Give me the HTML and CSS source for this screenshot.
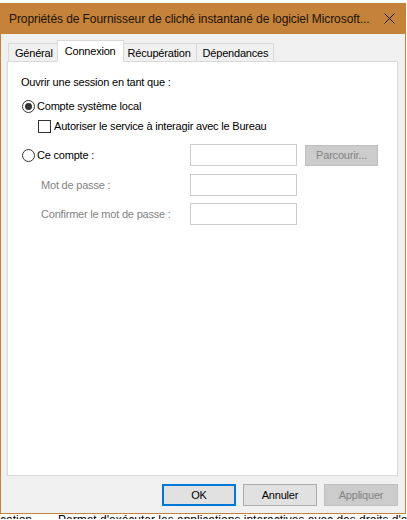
FILE: index.html
```html
<!DOCTYPE html>
<html lang="fr">
<head>
<meta charset="utf-8">
<title>Propriétés</title>
<link rel="stylesheet" href="styles.css">
</head>
<body>
<div class="window">
  <div class="titlebar">
    <span class="title">Propriétés de Fournisseur de cliché instantané de logiciel Microsoft...</span>
    <svg class="close" width="11" height="11" viewBox="0 0 11 11"><path d="M0.5 0.5 L10.5 10.5 M10.5 0.5 L0.5 10.5" stroke="#1a1a1a" stroke-width="1" fill="none"/></svg>
  </div>
  <div class="content">
    <div class="tabs">
      <div class="tab">Général</div>
      <div class="tab active">Connexion</div>
      <div class="tab">Récupération</div>
      <div class="tab">Dépendances</div>
    </div>
    <div class="panel">
      <div class="label">Ouvrir une session en tant que :</div>
      <div class="opt first"><span class="radio checked"></span><span>Compte système local</span></div>
      <div class="opt sub"><span class="check"></span><span>Autoriser le service à interagir avec le Bureau</span></div>
      <div class="acct">
        <div class="opt"><span class="radio"></span><span>Ce compte :</span></div>
        <div class="field"></div>
        <div class="btn disabled small">Parcourir...</div>
        <div class="dim">Mot de passe :</div>
        <div class="field"></div>
        <div></div>
        <div class="dim">Confirmer le mot de passe :</div>
        <div class="field"></div>
        <div></div>
      </div>
    </div>
    <div class="buttons">
      <div class="btn default">OK</div>
      <div class="btn">Annuler</div>
      <div class="btn disabled">Appliquer</div>
    </div>
  </div>
</div>
<div class="behind"><span class="c1">cation</span><span class="c2">Permet d'exécuter les applications interactives avec des droits d'administrateur</span></div>
</body>
</html>
```

FILE: styles.css
```css
html, body {
  margin: 0;
  padding: 0;
  background: #ffffff;
  overflow: hidden;
}
body {
  width: 407px;
  height: 520px;
  font-family: "Liberation Sans", Arial, sans-serif;
  font-size: 11px;
  letter-spacing: -0.2px;
  color: #000;
}
.window {
  margin-top: 3px;
  width: 406px;
  height: 511px;
  box-sizing: border-box;
  border: 1px solid #c4823b;
  border-top: none;
  background: #f0f0f0;
  display: flex;
  flex-direction: column;
}
.titlebar {
  height: 31px;
  background: #c4823b;
  margin: 0 -1px;
  display: flex;
  align-items: center;
  justify-content: space-between;
  padding: 0 11px 0 9px;
  flex: none;
}
.title {
  font-size: 12px;
  letter-spacing: -0.08px;
  color: #1c1206;
  white-space: nowrap;
}
.close {
  display: block;
}
.content {
  flex: 1;
  padding: 7px 7px 0 6px;
  display: flex;
  flex-direction: column;
}
.tabs {
  display: flex;
  align-items: flex-end;
  height: 20px;
  padding-left: 2px;
  position: relative;
  z-index: 1;
}
.tab {
  height: 18px;
  box-sizing: border-box;
  border: 1px solid #d9d9d9;
  border-bottom: none;
  background: #f0f0f0;
  padding: 0 5px 0 6px;
  display: flex;
  align-items: center;
  margin-left: -1px;
  white-space: nowrap;
}
.tab.active {
  height: 22px;
  margin-bottom: -1px;
  background: #ffffff;
  margin-left: -2px;
  margin-right: -2px;
  padding: 0 7px 2px;
  position: relative;
  z-index: 2;
}
.panel {
  height: 415px;
  box-sizing: border-box;
  background: #ffffff;
  border: 1px solid #d9d9d9;
  padding: 13px 13px 0 13px;
}
.label {
  line-height: 15px;
}
.opt {
  display: flex;
  align-items: center;
  height: 16px;
  gap: 2px;
}
.opt.first {
  margin-top: 8px;
  padding-left: 1px;
}
.opt.sub {
  margin-top: 4px;
  padding-left: 17px;
  gap: 3px;
}
.radio {
  width: 13px;
  height: 13px;
  box-sizing: border-box;
  border: 1px solid #333333;
  border-radius: 50%;
  display: flex;
  align-items: center;
  justify-content: center;
  background: #fff;
  flex: none;
}
.radio.checked::after {
  content: "";
  width: 7px;
  height: 7px;
  border-radius: 50%;
  background: #333333;
}
.check {
  width: 13px;
  height: 13px;
  box-sizing: border-box;
  border: 1px solid #333333;
  background: #fff;
  flex: none;
}
.acct {
  margin-top: 10px;
  display: grid;
  grid-template-columns: 161px 107px 73px;
  grid-template-rows: 22px 23px 22px;
  column-gap: 8px;
  row-gap: 7px;
  align-items: center;
}
.acct .opt {
  padding-left: 1px;
}
.dim {
  color: #838383;
  padding-left: 20px;
}
.field {
  height: 22px;
  box-sizing: border-box;
  border: 1px solid #cccccc;
  background: #fff;
}
.buttons {
  margin-top: 8px;
  display: flex;
  justify-content: flex-end;
  gap: 7px;
}
.btn {
  width: 74px;
  height: 22px;
  box-sizing: border-box;
  border: 1px solid #adadad;
  background: #e1e1e1;
  display: flex;
  align-items: center;
  justify-content: center;
}
.btn.default {
  border: 2px solid #0078d7;
}
.btn.disabled {
  background: #cccccc;
  border-color: #bfbfbf;
  color: #838383;
}
.btn.small {
  width: 73px;
  height: 21px;
}
.behind {
  height: 6px;
  overflow: hidden;
  white-space: nowrap;
  font-size: 12px;
  letter-spacing: 0;
  line-height: 14px;
  margin-top: -1px;
}
.c1 {
  display: inline-block;
  width: 58px;
}
```
